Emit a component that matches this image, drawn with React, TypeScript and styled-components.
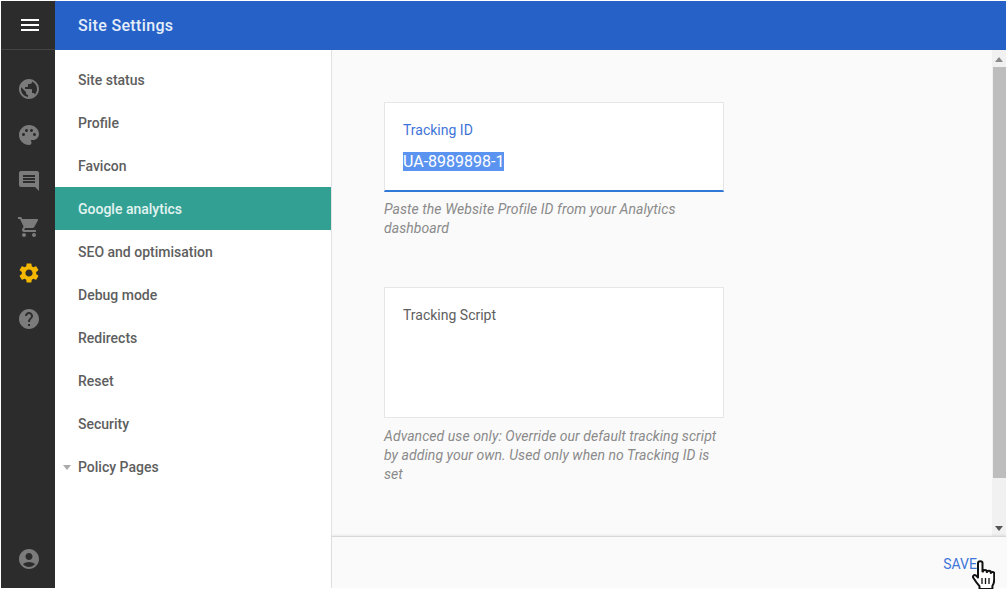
import React from 'react';
import styled, { createGlobalStyle } from 'styled-components';
import {
    MdAccountCircle,
    MdHelp,
    MdInsertComment,
    MdMenu,
    MdPalette,
    MdPublic,
    MdSettings,
    MdShoppingCart,
} from 'react-icons/md';

const GlobalStyle = createGlobalStyle`
    html, body {
        margin: 0;
        padding: 0;
        height: 100%;
        overflow: hidden;
        background: #ffffff;
        font-family: Roboto, "Liberation Sans", sans-serif;
    }
    #root {
        height: 100%;
    }
    * {
        box-sizing: border-box;
    }
`;

const railIcons = [
    { id: 'public', Icon: MdPublic },
    { id: 'palette', Icon: MdPalette },
    { id: 'chat', Icon: MdInsertComment },
    { id: 'cart', Icon: MdShoppingCart },
    { id: 'settings', Icon: MdSettings, active: true },
    { id: 'help', Icon: MdHelp },
];

const navItems = [
    'Site status',
    'Profile',
    'Favicon',
    'Google analytics',
    'SEO and optimisation',
    'Debug mode',
    'Redirects',
    'Reset',
    'Security',
];

const HandCursor = () => (
    <Cursor width="23" height="30" viewBox="0 0 23 30">
        <path
            d="M6 3c0-2.400 4.500-2.400 4.500 0v8.500l.5-.1c0-2 3.800-2 3.800 0v.6l.4.100c0-1.800 3.500-1.800 3.500 0v.8l.3.100c.3-1.500 3.200-1.400 3.200.5v6c0 3-.8 5-1.800 6.500V29H7.500v-2.800C5.500 24 3 20.500 1.300 17.800c-1-1.700 1-3.600 2.700-2.200L6 17.500z"
            fill="#ffffff"
            stroke="#111111"
            strokeWidth="2"
            strokeLinejoin="round"
        />
        <path d="M10 18v6M13.500 18v6M17 18v6" stroke="#111111" strokeWidth="1.300" />
    </Cursor>
);

export default function App() {
    return (
        <>
            <GlobalStyle />
            <Page>
                <Rail>
                    <MenuCell>
                        <MdMenu size={24} color="#ffffff" />
                    </MenuCell>
                    <RailList>
                        {railIcons.map(({ id, Icon, active }) => (
                            <RailItem key={id} $active={active}>
                                <Icon size={24} />
                            </RailItem>
                        ))}
                    </RailList>
                    <RailItem>
                        <MdAccountCircle size={24} />
                    </RailItem>
                </Rail>
                <Main>
                    <Header>
                        <Title>Site Settings</Title>
                    </Header>
                    <Body>
                        <Sidebar>
                            {navItems.map((item) => (
                                <NavItem key={item} $active={item === 'Google analytics'}>
                                    {item}
                                </NavItem>
                            ))}
                            <NavItem>
                                <Caret />
                                Policy Pages
                            </NavItem>
                        </Sidebar>
                        <Panel>
                            <ScrollArea>
                                <Content>
                                    <Card $focused>
                                        <FieldLabel $focused>Tracking ID</FieldLabel>
                                        <FieldValue>
                                            <Selected>UA-8989898-1</Selected>
                                        </FieldValue>
                                    </Card>
                                    <Hint>Paste the Website Profile ID from your Analytics dashboard</Hint>
                                    <Card $tall>
                                        <FieldLabel>Tracking Script</FieldLabel>
                                    </Card>
                                    <Hint>
                                        Advanced use only: Override our default tracking script by adding your
                                        own. Used only when no Tracking ID is set
                                    </Hint>
                                </Content>
                                <Scrollbar>
                                    <ArrowUp />
                                    <ThumbTrack>
                                        <Thumb />
                                    </ThumbTrack>
                                    <ArrowDown />
                                </Scrollbar>
                            </ScrollArea>
                            <Footer>
                                <SaveButton>SAVE</SaveButton>
                                <HandCursor />
                            </Footer>
                        </Panel>
                    </Body>
                </Main>
            </Page>
        </>
    );
}

const Page = styled.div`
    display: flex;
    height: 589px;
    width: 1007px;
    padding: 1px;
`;

const Rail = styled.aside`
    display: flex;
    flex-direction: column;
    align-items: center;
    width: 54px;
    flex-shrink: 0;
    padding-bottom: 6px;
    background: #2c2c2c;
`;

const MenuCell = styled.div`
    display: flex;
    align-items: center;
    justify-content: center;
    align-self: stretch;
    height: 49px;
    padding-left: 4px;
    border-bottom: 1px solid #434343;
`;

const RailList = styled.div`
    display: flex;
    flex-direction: column;
    flex: 1;
    padding-top: 16px;
`;

const RailItem = styled.div<{ $active?: boolean }>`
    display: flex;
    align-items: center;
    justify-content: center;
    height: 46px;
    width: 54px;
    padding-left: 2px;
    color: ${(p) => (p.$active ? '#f5b800' : '#7b7b7b')};
`;

const Main = styled.div`
    display: flex;
    flex-direction: column;
    flex: 1;
    min-width: 0;
`;

const Header = styled.header`
    display: flex;
    align-items: center;
    height: 49px;
    padding: 0 0 1px 23px;
    background: #2561c6;
`;

const Title = styled.h1`
    margin: 0;
    color: #e6eefb;
    font-size: 16px;
    font-weight: 500;
    letter-spacing: 0.35px;
`;

const Body = styled.div`
    display: flex;
    flex: 1;
    min-height: 0;
`;

const Sidebar = styled.nav`
    width: 277px;
    flex-shrink: 0;
    padding-top: 8px;
    background: #ffffff;
    border-right: 1px solid #e2e2e2;
`;

const NavItem = styled.div<{ $active?: boolean }>`
    position: relative;
    display: flex;
    align-items: center;
    height: 43px;
    padding-left: 23px;
    font-size: 14px;
    font-weight: 500;
    color: ${(p) => (p.$active ? '#e2f3f0' : '#5e5e5e')};
    background: ${(p) => (p.$active ? '#32a194' : 'transparent')};
`;

const Caret = styled.span`
    position: absolute;
    left: 8px;
    top: 20px;
    border-left: 4px solid transparent;
    border-right: 4px solid transparent;
    border-top: 5px solid #aaaaaa;
`;

const Panel = styled.main`
    display: flex;
    flex-direction: column;
    flex: 1;
    min-width: 0;
    background: #fafafa;
`;

const ScrollArea = styled.div`
    display: flex;
    flex: 1;
    min-height: 0;
`;

const Content = styled.div`
    flex: 1;
    padding: 52px 0 0 52px;
`;

const Card = styled.div<{ $focused?: boolean; $tall?: boolean }>`
    width: 340px;
    height: ${(p) => (p.$tall ? '131px' : '90px')};
    padding: 19px 18px 0;
    background: #ffffff;
    border: 1px solid #e6e6e6;
    ${(p) => p.$focused && 'border-bottom: 2px solid #2f78d8;'}
`;

const FieldLabel = styled.div<{ $focused?: boolean }>`
    font-size: 14px;
    line-height: 16px;
    color: ${(p) => (p.$focused ? '#3f75d8' : '#5e5e5e')};
`;

const FieldValue = styled.div`
    margin-top: 14px;
    font-size: 16px;
    line-height: 20px;
`;

const Selected = styled.span`
    color: #ffffff;
    background: #5b93f0;
`;

const Hint = styled.p`
    width: 340px;
    height: 95px;
    margin: 0;
    padding-top: 8px;
    font-size: 14px;
    font-style: italic;
    line-height: 19px;
    letter-spacing: 0.06px;
    color: #8a8a8a;
    & + div + & {
        padding-top: 9px;
    }
`;

const Scrollbar = styled.div`
    display: flex;
    flex-direction: column;
    align-items: center;
    width: 14px;
    background: #f1f1f1;
`;

const ArrowUp = styled.div`
    margin: 7px 0 5px;
    border-left: 4px solid transparent;
    border-right: 4px solid transparent;
    border-bottom: 5px solid #8a8a8a;
`;

const ArrowDown = styled.div`
    margin: 5px 0 5px;
    border-left: 4px solid transparent;
    border-right: 4px solid transparent;
    border-top: 5px solid #555555;
`;

const ThumbTrack = styled.div`
    flex: 1;
    align-self: stretch;
`;

const Thumb = styled.div`
    height: 411px;
    margin-left: 1px;
    background: #bdbdbd;
`;

const Footer = styled.footer`
    position: relative;
    display: flex;
    align-items: center;
    justify-content: flex-end;
    height: 52px;
    padding: 2px 29px 0 0;
    background: #fafafa;
    border-top: 1px solid #d8d8d8;
    box-shadow: 0 -1px 2px rgba(0, 0, 0, 0.08);
`;

const SaveButton = styled.button`
    padding: 0;
    border: 0;
    background: none;
    font-family: inherit;
    font-size: 14px;
    color: #3f75d8;
`;

const Cursor = styled.svg`
    position: absolute;
    right: 11px;
    top: 23px;
`;
